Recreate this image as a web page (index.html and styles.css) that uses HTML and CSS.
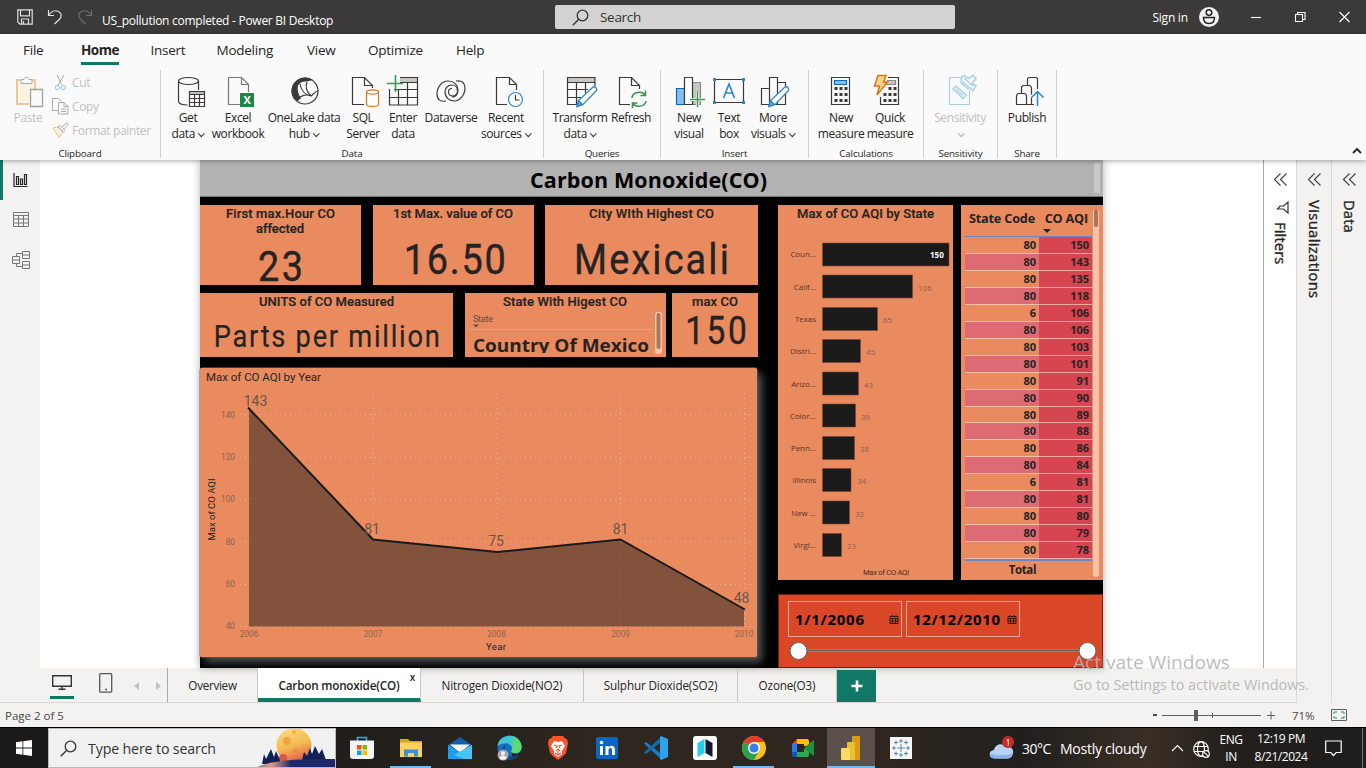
FILE: index.html
```html
<!DOCTYPE html>
<html lang="en">
<head>
<meta charset="utf-8">
<title>US_pollution completed - Power BI Desktop</title>
<link rel="stylesheet" href="styles.css">
</head>
<body>
<header class="titlebar">
  <div class="quick">
    <svg width="16" height="16" viewBox="0 0 16 16" class="ln"><path d="M.8.8h14.4v14.4H3L.8 13zM3.5.8v6h9v-6M4.5 15v-5h7v5M6.5 12v3"/></svg>
    <svg width="16" height="16" viewBox="0 0 16 16" class="ln"><path d="M1.5 1v5.500h5.500M1.500 6.500C4 2.500 8 .8 11.500 2.500c4 2.200 3 6 .8 8L7.500 15"/></svg>
    <svg width="16" height="16" viewBox="0 0 16 16" class="ln dim"><path d="M14.500 1v5.500H9M14.500 6.500C12 2.500 8 .8 4.500 2.500c-4 2.200-3 6-.8 8L8.500 15"/></svg>
  </div>
  <div class="doc">US_pollution completed - Power BI Desktop</div>
  <div class="search"><svg width="17" height="17" viewBox="0 0 17 17"><path d="M.8 16.200 6.500 10.500" /><circle cx="10.500" cy="6.500" r="5.300"/></svg><span>Search</span></div>
  <div class="signin">Sign in</div>
  <svg class="avatar" width="20" height="20" viewBox="0 0 20 20"><circle cx="10" cy="10" r="10" fill="#f3f2f1"/><g fill="none" stroke="#222" stroke-width="1.500"><circle cx="10" cy="5.600" r="2.800"/><path d="M4.500 10.500h11c0 4-2.300 6-5.500 6s-5.500-2-5.500-6z"/></g></svg>
  <div class="winbtns">
    <svg width="10" height="12" viewBox="0 0 10 12"><path d="M0 6.500h10"/></svg>
    <svg width="11" height="12" viewBox="0 0 11 12"><path d="M.5 3.500h7v7h-7zM2.500 3V1.500h7.500v7H8"/></svg>
    <svg width="11" height="12" viewBox="0 0 11 12"><path d="M.5 1l10 10M10.500 1l-10 10"/></svg>
  </div>
</header>

<section class="ribbon">
  <nav class="menu"><a class="m1">File</a><a class="m2 on">Home</a><a class="m3">Insert</a><a class="m4">Modeling</a><a class="m5">View</a><a class="m6">Optimize</a><a class="m7">Help</a></nav>
  <div class="groups">
    <div class="group clip">
      <div class="btns off">
        <div class="btn w56"><svg width="34" height="34" viewBox="0 0 34 34"><path d="M9 5H6v24h12M20 5h4v9" fill="none" stroke="#efc88f" stroke-width="2"/><path d="M8.500 7v20H18V14h4V7z" fill="#fdf3e0"/><path d="M10 8.500V4.500h3c0-3 5-3 5 0h3v4z" fill="#fafafa" stroke="#aaa"/><path d="M19.500 14.500h12v17h-12z" fill="#fafafa" stroke="#a0a0a0" stroke-width="1.300"/></svg><span>Paste</span></div>
        <div class="clipcol">
          <div><svg width="17" height="17" viewBox="0 0 17 17" fill="none" stroke="#aaa"><path d="M5 1l5 10M12 1L6 11"/><g stroke="#9cc9e8"><rect x="3.500" y="11.500" width="4" height="4" rx="1.500"/><rect x="9.500" y="11.500" width="4" height="4" rx="1.500"/></g></svg><span>Cut</span></div>
          <div><svg width="17" height="17" viewBox="0 0 17 17" fill="none" stroke="#aaa"><path d="M6 12.500H.5V.5h6l3 3"/><path d="M6.500 4.500h5.500l4 4v7.500H6.500zM12 4.500v4h4M9 11h5M9 13.500h5"/></svg><span>Copy</span></div>
          <div><svg width="17" height="17" viewBox="0 0 17 17" fill="none" stroke="#aaa"><path d="M1 6l5-1 5 5-4 5.500z" fill="#fdf0dc" stroke="#edc08a"/><path d="M6 5l2-1.500 5 5L11.500 10zM10 5l4.500-4.200 1.700 1.500L12 7"/></svg><span>Format painter</span></div>
        </div>
      </div>
      <div class="glabel">Clipboard</div>
    </div>
    <div class="group data">
      <div class="btns">
        <div class="btn w50"><svg width="34" height="34" viewBox="0 0 34 34" class="ic"><path d="M7.500 6v20c0 2.500 3 4 9 4M27.500 6v9"/><ellipse cx="17.500" cy="6" rx="10" ry="3.500"/><path d="M18.500 16.500h15v15h-15z" fill="#fff"/><path d="M19 17h14v2H19z" fill="#bbb" stroke="none"/><path d="M18.500 19.500h15M18.500 23.500h15M18.500 27.500h15M23.500 19.500v12M28.500 19.500v12"/></svg><span>Get<br>data<i></i></span></div>
        <div class="btn w50"><svg width="34" height="34" viewBox="0 0 34 34" class="ic thin"><path d="M19 29.500H7.500v-27h13l7 7V17M20.500 2.500v7h7"/><path d="M19 18h14v14H19z" fill="#1b8747" stroke="none"/><text x="26" y="29" class="xl">X</text></svg><span>Excel<br>workbook</span></div>
        <div class="btn w82"><svg width="34" height="34" viewBox="0 0 34 34" class="ic"><circle cx="18" cy="16" r="13"/><path d="M10 5.500C14 1.500 22 1.500 26 5l-6 1.500c-4-.5-7 .5-9 4-1 4 0 8 3 13-2 1-3 2-3.500 3C4 22 3.500 15 6 10c1-2 2.500-3.500 4-4.500z" fill="#3b3a39" stroke="none"/><path d="M13 9c1 6 5 11 11 12M20 7c-2 5 0 10 4 14M10.500 25c3-5 9-6 13.500-4 3-2 4-5 7-5"/></svg><span>OneLake data<br>hub<i></i></span></div>
        <div class="btn w36"><svg width="34" height="34" viewBox="0 0 34 34" class="ic"><path d="M18 29.500H6.500v-27h12l8 8V13M18.500 2.500v8h8"/><g stroke="#d8761d"><path d="M20.500 17v12.500c0 2.500 12 2.500 12 0V17" fill="#fff"/><ellipse cx="26.500" cy="17" rx="6" ry="2.200" fill="#fff"/></g></svg><span>SQL<br>Server</span></div>
        <div class="btn w44"><svg width="34" height="34" viewBox="0 0 34 34" class="ic"><path d="M14 3h17v4H14z" fill="#c8c6c4" stroke="none"/><path d="M14 2.500h17.500v27.500h-28V14M14 7.500h17.500M8 14.500h23.500M4 22.500h27.500M12.500 14v16M21.500 7.500V30"/><path d="M9.500 0v17M1 8.500h16" stroke="#2f9e4f" stroke-width="1.600"/></svg><span>Enter<br>data</span></div>
        <div class="btn w52"><svg width="34" height="34" viewBox="0 0 34 34" class="ic"><path d="M22 6c6-1 9 2 9 7 0 7-5 13-11 13-5 0-9-4-9-9 0-4 3-7 6.500-7s6 2.500 6 6-2.500 5-5 5-4-2-4-4 1.500-3.500 3.500-3.500"/><path d="M12 26c-5 1-9-1-9-7C3 12 8 6 14 6c6 0 10 4 10 9 0 4-2.500 7-6 7"/></svg><span>Dataverse</span></div>
        <div class="btn w58"><svg width="34" height="34" viewBox="0 0 34 34" class="ic"><path d="M18 29.500H7.500v-27h13l7 7V15M20.500 2.500v7h7"/><circle cx="26.500" cy="24.500" r="7" stroke="#2a86c8" fill="#fff"/><path d="M26.500 20v5h4"/></svg><span>Recent<br>sources<i></i></span></div>
      </div>
      <div class="glabel">Data</div>
    </div>
    <div class="group quer">
      <div class="btns">
        <div class="btn w60"><svg width="34" height="34" viewBox="0 0 34 34" class="ic"><path d="M5 3h27v4H5z" fill="#c8c6c4" stroke="none"/><path d="M14 29.500H4.500v-27h27.500V11M4.500 7.500H32M4.500 14.500H25M4.500 22.500H18M13.500 7.500v22M22.500 7.500V18"/><path d="M14 31.500l1.500-6L29.500 12.500c2-2 5.500 1 3.500 3.500L20 29.500z" fill="#fff" stroke="#2a86c8"/><path d="M14 31.500l1.500-6 4 4z" fill="#5aa5dc" stroke="#2a86c8"/></svg><span>Transform<br>data<i></i></span></div>
        <div class="btn w42"><svg width="34" height="34" viewBox="0 0 34 34" class="ic"><path d="M16 29.500H5.500v-27h12l8 8V14M17.500 2.500v8h8"/><g stroke="#3a8f4a" stroke-width="1.500"><path d="M18 23c0-6 10-8 13.500-2.500M31.500 15.500v5h-5M32 26c-1 6-10 7-13.500 2M18.500 33v-5h5"/></g></svg><span>Refresh</span></div>
      </div>
      <div class="glabel">Queries</div>
    </div>
    <div class="group ins">
      <div class="btns">
        <div class="btn w40"><svg width="34" height="34" viewBox="0 0 34 34" class="ic"><path d="M20.500 7.500h8v22h-8z" fill="#c8c6c4" stroke="#8a8886"/><path d="M4.500 13.500h8v16h-8z" fill="#83beec" stroke="#1067b5"/><path d="M12.500 2.500h8v27h-8z" fill="#fff"/><path d="M25.500 16v16M18 24.500h15" stroke="#fafafa" stroke-width="3"/><path d="M25.500 16v16M18 24.500h15" stroke="#2f9e4f" stroke-width="1.500"/></svg><span>New<br>visual</span></div>
        <div class="btn w40"><svg width="34" height="34" viewBox="0 0 34 34" class="ic"><path d="M2.500 4.500h29v23h-29z"/><g fill="#2a86c8" stroke="none"><path d="M1 3h3v3H1zM30 3h3v3h-3zM1 26h3v3H1zM30 26h3v3h-3z"/></g><path d="M11.500 23l5.500-14 5.500 14M13 18h8" stroke="#2a86c8" stroke-width="1.600"/></svg><span>Text<br>box</span></div>
        <div class="btn w48"><svg width="34" height="34" viewBox="0 0 34 34" class="ic"><path d="M5.500 13.500h8v16h-8zM13.500 2.500h8v27h-8zM21.500 7.500h8v22h-8"/><path d="M13 31.500l1.500-6L28.500 12.500c2-2 5.500 1 3.500 3.500L19 29.500z" fill="#fff" stroke="#2a86c8"/><path d="M13 31.500l1.500-6 4 4z" fill="#5aa5dc" stroke="#2a86c8"/></svg><span>More<br>visuals<i></i></span></div>
      </div>
      <div class="glabel">Insert</div>
    </div>
    <div class="group calc">
      <div class="btns">
        <div class="btn w50"><svg width="34" height="34" viewBox="0 0 34 34" class="ic"><path d="M7.500 2.500h18v27h-18z"/><path d="M10.500 5.500h12v4h-12z" fill="#83beec" stroke="#1067b5"/><path d="M10.500 13.500h13M10.500 19.500h13M10.500 25.500h13" stroke-width="3" stroke-dasharray="3 2"/></svg><span>New<br>measure</span></div>
        <div class="btn w48"><svg width="34" height="34" viewBox="0 0 34 34" class="ic"><path d="M15 2.500h10.500v27h-18V22"/><path d="M14 5.500h8.500v4H13" fill="#c8c6c4" stroke="#8a8886"/><path d="M15.500 13.500h8M10.500 19.500h13M10.500 25.500h13" stroke-width="3" stroke-dasharray="3 2"/><path d="M5 .5h8L10.500 7h4L4 20l2.500-9H1.500z" fill="#fbd38a" stroke="#d8761d" stroke-width="1.500"/></svg><span>Quick<br>measure</span></div>
      </div>
      <div class="glabel">Calculations</div>
    </div>
    <div class="group sens">
      <div class="btns off">
        <div class="btn w60"><svg width="34" height="34" viewBox="0 0 34 34" fill="none" stroke="#a9d2ea" stroke-width="1.200"><path d="M18 2.500H6.500v27h20V16"/><path d="M10 14l3-3 10 9-3 3.500zM13 14l7 6.500M19 1.500l3-1 3 3 5-3 3 3-4 5 4 2-3 5-12-10zM17 7l9 8M21 3l9 8" stroke-width="1.500"/></svg><span>Sensitivity<br><i></i></span></div>
      </div>
      <div class="glabel">Sensitivity</div>
    </div>
    <div class="group share">
      <div class="btns">
        <div class="btn w40"><svg width="34" height="34" viewBox="0 0 34 34" class="ic"><path d="M6.500 29.500v-9l1.500-2h7l1.500 2v9zM11.500 18v-6l1.500-1.500h7l1.500 2v17H16M17.500 10V3.500l1.500-1h7l1.500 1V14M21 29.500h3"/><path d="M27.500 31V16M21.500 22.500l6-6 6 6" stroke="#fafafa" stroke-width="4"/><path d="M27.500 31V16M21.500 22.500l6-6 6 6" stroke="#2a86c8" stroke-width="1.500"/></svg><span>Publish</span></div>
      </div>
      <div class="glabel">Share</div>
    </div>
    <svg class="collapse" width="10" height="6" viewBox="0 0 10 6"><path d="M1 5l4-4 4 4"/></svg>
  </div>
</section>

<main class="main">
  <div class="left">
    <div class="work">
      <aside class="rail">
        <div class="on"><svg width="18" height="16" viewBox="0 0 18 16"><path d="M2 1v13.500h13.500M4.500 4.500h2v8h-2zM8.500 7h2v5.500h-2zM12.500 2.500h2v10h-2z" stroke="#252423" stroke-width="1.200"/></svg></div>
        <div><svg width="18" height="16" viewBox="0 0 18 16"><path d="M1.500.5h15v14h-15zM1.500 3.500h15M1.500 7h15M1.500 11h15M6.500 3.500v11M11.500 3.500v11"/></svg></div>
        <div><svg width="20" height="18" viewBox="0 0 20 18"><path d="M1.500 5.500h7v7h-7zM1.500 9h7M11.500.5h7v7h-7zM11.500 4h7M11.500 10.500h7v7h-7zM11.500 14h7M5.500 5V2.500h6M5.500 13v2.500h6"/></svg></div>
      </aside>
      <div class="canvas">
        <article class="report">
          <div class="heading"><svg width="240" height="36"><text x="3" y="28" textLength="237" class="ttl">Carbon Monoxide(CO)</text></svg><b></b></div>
          <div class="cols">
            <div class="colA">
              <div class="row r1">
                <svg class="card" width="161" height="80"><text x="26" y="13" textLength="109" class="ct">First max.Hour CO</text><text x="56" y="28" textLength="48" class="ct">affected</text><text transform="scale(.88 1)" x="66" y="76" textLength="51" class="big">23</text></svg>
                <svg class="card" width="161" height="80"><text x="20" y="13" textLength="120" class="ct">1st Max. value of CO</text><text transform="scale(.88 1)" x="35" y="69" textLength="116" class="big">16.50</text></svg>
                <svg class="card" width="213" height="80"><text x="44" y="13" textLength="125" class="ct">City WIth Highest CO</text><text transform="scale(.88 1)" x="33" y="69" textLength="176" class="big">Mexicali</text></svg>
              </div>
              <div class="row r2">
                <svg class="card" width="253" height="64"><text x="59" y="13" textLength="135" class="ct">UNITS of CO Measured</text><text transform="scale(.88 1)" x="15.500" y="54" textLength="257" class="mid">Parts per million</text></svg>
                <svg class="card" width="201" height="64"><text x="38" y="13" textLength="124" class="ct">State With Higest CO</text><text x="8" y="29" textLength="20" class="tiny">State</text><path d="M8 31.500h6l-3 3z" fill="#6b4a3a"/><path d="M4 36.500h184" stroke="#e3a080"/><svg width="188" height="60" class="cut"><text x="8" y="59" textLength="176" lengthAdjust="spacingAndGlyphs" class="seg">Country Of Mexico</text></svg><rect x="190" y="19" width="7" height="42" rx="3" fill="#f7c6ad"/><rect x="191.500" y="20" width="4" height="36" rx="2" fill="#a8755d"/></svg>
                <svg class="card" width="86" height="64"><text x="20" y="13" textLength="46" class="ct">max CO</text><text transform="scale(.88 1)" x="15" y="51" textLength="70" class="big b2">150</text></svg>
              </div>
              <svg class="area" width="557" height="289" viewBox="0 0 557 289">
                <text x="6" y="13" textLength="115" class="at">Max of CO AQI by Year</text>
                <g class="grid"><path d="M40 46.500h512M40 89.500h512M40 131.500h512M40 173.500h512M40 216.500h512M40 258.500h512M49.500 25v234M173 25v234M297 25v234M420.500 25v234M544.500 25v234"/></g>
                <path d="M49 40L173 171.500 297 184 420.500 171.500 544 241V258.500H49z" fill="#1a1a1a" fill-opacity=".5"/>
                <path d="M48 39.500L173 171.500 297 184 420.500 171.500 545 241.500" fill="none" stroke="#1a1a1a" stroke-width="2"/>
                <g class="ax end"><text x="35" y="50">140</text><text x="35" y="92">120</text><text x="35" y="134">100</text><text x="35" y="177">80</text><text x="35" y="219">60</text><text x="35" y="261">40</text></g>
                <g class="ax midl"><text x="49" y="269">2006</text><text x="173" y="269">2007</text><text x="296.500" y="269">2008</text><text x="420.500" y="269">2009</text><text x="544" y="269">2010</text></g>
                <g class="dl"><text x="55.500" y="38">143</text><text x="172" y="166">81</text><text x="296" y="178">75</text><text x="420.500" y="166">81</text><text x="541.500" y="235">48</text></g>
                <text x="286" y="282" textLength="20" class="an">Year</text>
                <text transform="translate(15 172.500) rotate(-90)" textLength="62" class="an">Max of CO AQI</text>
              </svg>
            </div>
            <div class="colB">
              <div class="row r3">
                <svg class="card" width="175" height="375" viewBox="0 0 175 375">
                  <text x="19" y="13" textLength="137" class="ct">Max of CO AQI by State</text>
                  <g fill="#1a1a1a" stroke="#7a4630" stroke-width=".6"><path d="M44.500 38h126.500v23h-126.500zM44.500 70h90v23h-90zM44.500 102.500h55v23h-55zM44.500 134.500h38v23h-38zM44.500 167h36v23h-36zM44.500 199h33v23h-33zM44.500 231.500h32v23h-32zM44.500 263.500h28.500v23h-28.500zM44.500 296h27v23h-27zM44.500 328.500h19v23h-19z"/></g>
                  <g class="bl"><text x="38" y="52">Coun...</text><text x="38" y="85">Calif...</text><text x="38" y="117">Texas</text><text x="38" y="149">Distri...</text><text x="38" y="182">Arizo...</text><text x="38" y="214">Color...</text><text x="38" y="246">Penn...</text><text x="38" y="278">Illinois</text><text x="38" y="311">New ...</text><text x="38" y="343">Virgi...</text></g>
                  <g class="bv"><text x="152" y="53" class="wh">150</text><text x="140" y="86">106</text><text x="105" y="118">65</text><text x="88" y="150">45</text><text x="86" y="183">43</text><text x="83" y="215">39</text><text x="82" y="247">38</text><text x="79" y="279">34</text><text x="77" y="312">32</text><text x="69" y="344">23</text></g>
                  <text x="85" y="370" textLength="46" class="mx">Max of CO AQI</text>
                </svg>
                <div class="tablecard">
                  <div class="tbl">
                    <div class="th"><span>State Code</span><span>CO AQI</span></div>
                    <div class="tr"><span>80</span><span>150</span></div><div class="tr"><span>80</span><span>143</span></div><div class="tr"><span>80</span><span>135</span></div><div class="tr"><span>80</span><span>118</span></div><div class="tr"><span>6</span><span>106</span></div><div class="tr"><span>80</span><span>106</span></div><div class="tr"><span>80</span><span>103</span></div><div class="tr"><span>80</span><span>101</span></div><div class="tr"><span>80</span><span>91</span></div><div class="tr"><span>80</span><span>90</span></div><div class="tr"><span>80</span><span>89</span></div><div class="tr"><span>80</span><span>88</span></div><div class="tr"><span>80</span><span>86</span></div><div class="tr"><span>80</span><span>84</span></div><div class="tr"><span>6</span><span>81</span></div><div class="tr"><span>80</span><span>81</span></div><div class="tr"><span>80</span><span>80</span></div><div class="tr"><span>80</span><span>79</span></div><div class="tr"><span>80</span><span>78</span></div>
                    <div class="tf"><span>Total</span></div>
                  </div>
                  <div class="sb"><b></b></div>
                </div>
              </div>
              <div class="slicer">
                <div class="dates">
                  <div class="date"><svg width="70" height="20"><text x="0" y="15" textLength="69">1/1/2006</text></svg><svg width="10" height="9" viewBox="0 0 10 9" class="cal"><path d="M1 1.500h8v7H1zM1 3.500h8M1 6h8M3.500 3.500v5M6.500 3.500v5M3 0v2M7 0v2"/></svg></div>
                  <div class="date"><svg width="88" height="20"><text x="0" y="15" textLength="87">12/12/2010</text></svg><svg width="10" height="9" viewBox="0 0 10 9" class="cal"><path d="M1 1.500h8v7H1zM1 3.500h8M1 6h8M3.500 3.500v5M6.500 3.500v5M3 0v2M7 0v2"/></svg></div>
                </div>
                <svg width="324" height="26" viewBox="0 0 324 26"><path d="M20 11.500h289" stroke="#b07a68" stroke-width="3"/><path d="M20 11.500h289" stroke="#605e5c"/><g fill="#fff" stroke="#605e5c"><circle cx="19.500" cy="12" r="8.500"/><circle cx="308.500" cy="12" r="8.500"/></g></svg>
              </div>
            </div>
          </div>
        </article>
      </div>
      <aside class="filters"><svg class="chev" width="13" height="13" viewBox="0 0 13 13"><path d="M6.500.5l-6 6 6 6M12.500.5l-6 6 6 6"/></svg><svg width="13" height="13" viewBox="0 0 13 13" class="fun"><path d="M12 1v11L7.500 8H1.500L4 5H7.500z" /></svg><span>Filters</span></aside>
    </div>
    <div class="tabs">
      <div class="views">
        <div class="vw on"><svg width="20" height="16" viewBox="0 0 20 16"><path d="M.7.700h18.600v10.500H.7z" stroke-width="1.400"/><path d="M10 11v3M6.500 14.300h7" stroke-width="1.400"/></svg></div>
        <svg class="ph" width="14" height="20" viewBox="0 0 14 20"><rect x=".7" y=".7" width="12" height="18.500" rx="1"/><path d="M6 16.500h2" /></svg>
        <svg class="ar" width="5" height="8" viewBox="0 0 5 8"><path d="M5 0v8L0 4z"/></svg>
        <svg class="ar a2" width="5" height="8" viewBox="0 0 5 8"><path d="M0 0v8l5-4z"/></svg>
      </div>
      <div class="tab t1"><span>Overview</span></div><div class="tab t2 on"><span>Carbon monoxide(CO)</span><em>x</em></div><div class="tab t3"><span>Nitrogen Dioxide(NO2)</span></div><div class="tab t4"><span>Sulphur Dioxide(SO2)</span></div><div class="tab t5"><span>Ozone(O3)</span></div>
      <div class="plus"><svg width="12" height="12" viewBox="0 0 12 12"><path d="M6 .5v11M.5 6h11" stroke="#fff" stroke-width="2.600"/></svg></div>
    </div>
  </div>
  <aside class="pane"><svg class="chev" width="13" height="13" viewBox="0 0 13 13"><path d="M6.500.5l-6 6 6 6M12.500.5l-6 6 6 6"/></svg><span class="s1">Visualizations</span></aside>
  <aside class="pane"><svg class="chev" width="13" height="13" viewBox="0 0 13 13"><path d="M6.500.5l-6 6 6 6M12.500.5l-6 6 6 6"/></svg><span class="s2">Data</span></aside>
</main>

<footer class="status">
  <span class="pg">Page 2 of 5</span>
  <svg width="124" height="14" viewBox="0 0 124 14"><path d="M1 7h4" stroke="#444" stroke-width="2"/><path d="M10 7.500h99" stroke="#605e5c"/><path d="M42 2h4v11h-4z" fill="#605e5c"/><path d="M60.500 5v5M115 7.500h8M119 3.500v8" stroke="#605e5c"/></svg>
  <span class="pct">71%</span>
  <svg width="16" height="12" viewBox="0 0 16 12" fill="none" stroke="#605e5c"><path d="M.5.500h15v11H.5z"/><path d="M3 5V3h3M10 3h3v2M13 7v2h-3M6 9H3V7" stroke="#3f8a5c"/></svg>
</footer>

<footer class="taskbar">
  <div class="start"><svg width="16" height="16" viewBox="0 0 16 16" fill="#fff"><path d="M0 2.200l6.500-.9v6.200H0zM7.300 1.200L16 0v7.500H7.300zM0 8.400h6.500v6.300L0 13.800zM7.300 8.400H16V16l-8.700-1.200z"/></svg></div>
  <div class="tsearch"><svg width="17" height="17" viewBox="0 0 17 17" class="mg"><path d="M.8 16.200 6.500 10.500" /><circle cx="10.500" cy="6.500" r="5.300"/></svg><span>Type here to search</span>
    <svg class="moon" width="80" height="40" viewBox="0 0 80 40"><defs><linearGradient id="mn" x1="0" y1="0" x2=".3" y2="1"><stop offset="0" stop-color="#fbe08a"/><stop offset=".6" stop-color="#f6b850"/><stop offset="1" stop-color="#e2684a"/></linearGradient><linearGradient id="hl"><stop offset="0" stop-color="#77708e"/><stop offset=".2" stop-color="#e89a86"/><stop offset=".45" stop-color="#1c2a6c"/></linearGradient></defs><circle cx="39" cy="17.500" r="17.500" fill="url(#mn)"/><circle cx="32" cy="13" r="4" fill="#e8a83f"/><circle cx="48" cy="11.500" r="3" fill="#eec05c"/><circle cx="39" cy="4" r="2" fill="#e8b548"/><circle cx="40" cy="23" r="2.500" fill="#e88e4a"/><circle cx="28" cy="30" r="4" fill="#d9554a"/><path d="M7 36l2-10 2 5 5-10 3 8 2-6 4 9v4zM47 32l2-8 3 4 3-8 2 6 3-8 4 8 3-5 4 11z" fill="#122058"/><path d="M0 40c16-8 40-9 80-9v9z" fill="url(#hl)"/></svg></div>
  <div class="apps">
    <div><svg width="24" height="24" viewBox="0 0 24 24"><path d="M7.500 6V1.500h9V6" fill="none" stroke="#2aa8e8" stroke-width="1.600"/><path d="M0 4.500h24V20a3 3 0 0 1-3 3H3a3 3 0 0 1-3-3z" fill="#f4f4f4"/><path d="M7 9h4.500v4.500H7z" fill="#f25022"/><path d="M12.500 9H17v4.500h-4.500z" fill="#7fba00"/><path d="M7 14.500h4.500V19H7z" fill="#00a4ef"/><path d="M12.500 14.500H17V19h-4.500z" fill="#ffb900"/></svg></div>
    <div class="run"><svg width="24" height="24" viewBox="0 0 24 24"><path d="M1 3h8l2 2h12v5H1z" fill="#e0a21c"/><path d="M1 6.500h22V21H1z" fill="#fdd25f"/><path d="M5 20.500v-7h14v7h-4v-3.500H9v3.500z" fill="#3d8fd8"/></svg></div>
    <div><svg width="24" height="24" viewBox="0 0 24 24"><path d="M0 9L12 1l12 8v3H0z" fill="#0f5ca8"/><path d="M2 8.500h20L12 17z" fill="#f5f5f5"/><path d="M0 9l12 7L24 9v14H0z" fill="#1f9de6"/><path d="M24 9L6 19l10 4h8z" fill="#4cc3f3"/></svg></div>
    <div><svg width="26" height="26" viewBox="0 0 26 26"><circle cx="13.500" cy="12.500" r="12" fill="#1272c4"/><path d="M1.500 11C3-2 24-3 25.500 11c.5 5-3 8-8 7-3-1-2-2-1.500-3 2-5-6-10-14.500-4z" fill="#3fc8d0"/><path d="M17 2c6 2 8.500 6 8.500 10s-4 7-8.500 6c-2-1-2-2-1-4 1-4 1-8 1-12z" fill="#5fda72"/><path d="M10 9c-3 6 0 13 8 13 2 0 4-1 5-2-5 8-16 5-17-2-.6-4 2-8 4-9z" fill="#0d4c95"/><path d="M16 18c5 2 8 0 10-3v11H15z" fill="#2c251f"/><path d="M8 13c0 7 7 11 15 7-4 6-15 7-18-1z" fill="#0d4c95"/><circle cx="7" cy="20" r="5.500" fill="#a9a9a9"/><circle cx="7" cy="18.300" r="2" fill="#f2f2f2"/><path d="M3.500 23.500c0-4 7-4 7 0-2 1.800-5 1.800-7 0z" fill="#f2f2f2"/></svg></div>
    <div><svg width="22" height="24" viewBox="0 0 22 24"><path d="M6 0h10l2 2.500 2 .5 1 4-2 10-4 4-4 3-4-3-4-4L1 7l1-4 2-.5z" fill="#fb542b"/><path d="M7 5l4 1 4-1 3 5-3 5 0 3-4 3-4-3V15l-3-5z" fill="#fff"/><path d="M7 9l3 1-1 2M15 9l-3 1 1 2M9 15l2-2 2 2M11 15v3M8 17l3 2 3-2" fill="none" stroke="#fb542b" stroke-width="1.200"/></svg></div>
    <div><svg width="22" height="22" viewBox="0 0 22 22"><rect width="22" height="22" rx="2" fill="#0a66c2"/><path d="M4 9h3v9H4zM9.500 9h3v1.500c2-3 6.500-2 6.500 2.500v5h-3v-5c0-3-3.500-2.500-3.500 0v5h-3z" fill="#fff"/><circle cx="5.500" cy="5.500" r="1.800" fill="#fff"/></svg></div>
    <div><svg width="24" height="24" viewBox="0 0 24 24"><path d="M0 7.500L2 6l16 12.500V24z" fill="#1480c8"/><path d="M0 16.500L2 18 18 5.500V0z" fill="#0f6cb0"/><path d="M17 0l7 3v18l-7 3-1-1V1z" fill="#2ba3ee"/></svg></div>
    <div><svg width="24" height="24" viewBox="0 0 24 24"><rect width="24" height="24" rx="3" fill="#fff"/><path d="M4.500 7l7-4v14l-7 4z" fill="#21cfe8"/><path d="M12.500 3l7 4v14l-7-4z" fill="#15152b"/></svg></div>
    <div class="run chrome"><svg width="24" height="24" viewBox="0 0 24 24"><circle cx="12" cy="12" r="12" fill="#fbc116"/><path d="M12 12L1.600 6A12 12 0 0 1 22.400 6z" fill="#e33b2e"/><path d="M12 12L1.600 6A12 12 0 0 0 12 24l5-9z" fill="#2ba24c"/><path d="M12 6h10.400L17 15z" fill="#fbc116"/><circle cx="12" cy="12" r="6" fill="#fff"/><circle cx="12" cy="12" r="4.600" fill="#3b7ded"/></svg></div>
    <div><svg width="24" height="20" viewBox="0 0 24 20"><path d="M6 1h10a2 2 0 0 1 2 2v5h-5V6H6z" fill="#fbbc04"/><path d="M6 1v5H1z" fill="#ea4335"/><path d="M1 6h5v8H1z" fill="#2b78f0"/><path d="M1 14h5v5H3a2 2 0 0 1-2-2z" fill="#1557c0"/><path d="M6 14h7v-3h5v6a2 2 0 0 1-2 2H6z" fill="#2fa84f"/><path d="M13 10l9-7.500c.6-.4 1 0 1 .5v14c0 .6-.5 1-1 .5z" fill="#1e8e3e"/></svg></div>
    <div class="run act"><svg width="24" height="24" viewBox="0 0 24 24"><rect x="13" y="0" width="8" height="24" rx="1" fill="#d99a16"/><rect x="8" y="6" width="8" height="18" rx="1" fill="#eebf30"/><rect x="2" y="12" width="9" height="12" rx="1" fill="#f8dc62"/></svg></div>
    <div><svg width="22" height="22" viewBox="0 0 22 22"><rect width="22" height="22" fill="#f6f6f6"/><path d="M11 7v8M7 11h8M11 2v4M9 4h4M11 16v4M9 18h4M2 11h4M4 9v4M16 11h4M18 9v4M6 3.500v4M4 5.500h4M16 3.500v4M14 5.500h4M6 14.500v4M4 16.500h4M16 14.500v4M14 16.500h4" stroke="#4a7ba6" stroke-width=".9"/></svg></div>
  </div>
  <div class="weather"><svg width="26" height="24" viewBox="0 0 26 24"><path d="M6 22.500c-7 0-7-8-1-8.500 1-6 8-8 12-3 5-1 8 3 7 6-.4 4-3 5.500-6 5.500z" fill="#b9d2f7"/><path d="M6 22.500c-5 0-6-4-4-5 5 2 14 2 21.500 0-.4 3.500-3 5-5.500 5z" fill="#8db2ee"/><circle cx="19" cy="6" r="6" fill="#c62a20"/><text x="19" y="9.500" class="n1">1</text></svg><span class="w1">30°C</span><span class="w2">Mostly cloudy</span></div>
  <svg class="up" width="13" height="8" viewBox="0 0 13 8"><path d="M1 7l5.500-5.500L12 7"/></svg>
  <svg class="globe" width="17" height="17" viewBox="0 0 17 17"><circle cx="8" cy="8" r="7.300"/><ellipse cx="8" cy="8" rx="3.500" ry="7.300"/><path d="M1 5.500h14M1 10.500h9"/><circle cx="13" cy="13" r="3.300" fill="#231f1c"/><path d="M10.800 10.800l4.400 4.400"/></svg>
  <div class="lang">ENG<br>IN</div>
  <div class="clock">12:19 PM<br>8/21/2024</div>
  <svg class="note" width="17" height="17" viewBox="0 0 17 17"><path d="M.7 1h15.500v11.500h-5l-2.700 3-2.700-3H.7z"/></svg>
  <div class="edge"></div>
</footer>

<div class="mark"><svg width="240" height="48"><text x="0" y="20" textLength="157" lengthAdjust="spacingAndGlyphs" class="k1">Activate Windows</text><text x="0" y="41" textLength="236" lengthAdjust="spacingAndGlyphs" class="k2">Go to Settings to activate Windows.</text></svg></div>
</body>
</html>
```
FILE: styles.css
```css
*{box-sizing:border-box}
body{margin:0;width:1366px;height:768px;overflow:hidden;display:flex;flex-direction:column;font-family:"Open Sans","Noto Sans",sans-serif;font-size:12px;color:#252423;background:#f3f2f1;position:relative}
svg{display:block;flex:none;overflow:visible}
.cut{overflow:hidden}
.titlebar{height:34px;background:#3b3a38;display:flex;align-items:center;color:#fff;flex:none}
.quick{display:flex;gap:14px;padding-left:17px;width:102px}
.ln{fill:none;stroke:#e0dfdd;stroke-width:1.2}
.dim{stroke:#6e6c6a}
.doc{width:453px;letter-spacing:-.27px;padding-top:6px;white-space:nowrap}
.search{width:400px;height:24px;background:#d4d3d1;border-radius:2px;display:flex;align-items:center;padding-left:17px;gap:11px;color:#333;font-size:13.500px;letter-spacing:-.3px}
.search svg,.mg{fill:none;stroke:#333;stroke-width:1.3}
.signin{margin-left:197.500px;width:46.500px;white-space:nowrap;letter-spacing:-.25px}
.winbtns{display:flex;gap:33.500px;margin-left:32px}
.winbtns svg{fill:none;stroke:#fff;stroke-width:1.1}
.ribbon{height:126px;background:#fafafa;flex:none;box-shadow:0 1px 5px rgba(0,0,0,.35);position:relative;z-index:2}
.menu{display:flex;height:35px;padding:7px 0 0 23px;font-size:13.500px;letter-spacing:-.25px}
.menu a{height:24px;margin-right:32px;white-space:nowrap;line-height:18px}
.m1{width:26px}.m2{width:38px}.m3{width:34px}.m4{width:58.500px}.m5{width:29px}.m6{width:56px}
.menu .on{font-weight:700;border-bottom:3px solid #117865;letter-spacing:-.5px}
.menu .m3{margin-left:-.5px}
.groups{display:flex;height:91px}
.group{height:88px;border-right:1px solid #d2d0ce;margin-top:1px;display:flex;flex-direction:column}
.clip{width:161px}.data{width:383px}.quer{width:117px}.ins{width:148px}.calc{width:115px}.sens{width:74px}.share{width:59px}
.btns{display:flex;height:75px;padding-top:5px;flex:none}
.data .btns{padding-left:2px}.quer .btns{padding-left:6px}.ins .btns{padding-left:8px}.calc .btns{padding-left:7px}.sens .btns{padding-left:6px}.share .btns{padding-left:9px}
.btn{display:flex;flex-direction:column;align-items:center;text-align:center;line-height:16px;letter-spacing:-.4px;white-space:nowrap;flex:none}
.btn span{margin-top:1px}
.w36{width:36px}.w40{width:40px}.w42{width:42px}.w44{width:44px}.w48{width:48px}.w50{width:50px}.w52{width:52px}.w56{width:56px}.w58{width:58px}.w60{width:60px}.w82{width:82px}
.btn i{display:inline-block;width:4.500px;height:4.500px;border:solid #252423;border-width:0 1.300px 1.300px 0;transform:rotate(45deg);margin:0 1px 3px 4px}
.off{color:#c2c0be}.off i{border-color:#a8a6a4}
.ic{fill:none;stroke:#3b3a39;stroke-width:1.200}
.thin{stroke:#777}
.xl{font:700 11px "Open Sans",sans-serif;fill:#fff;stroke:none;text-anchor:middle}
.glabel{font-size:9.800px;text-align:center;line-height:12px;letter-spacing:-.15px;margin-top:3px;flex:none}
.clipcol{line-height:17px;letter-spacing:-.36px;margin-top:-1px}
.clipcol div{display:flex;gap:3px;height:24px;margin-left:-4px;white-space:nowrap}
.collapse{margin:79px 0 0 295px;fill:none;stroke:#252423;stroke-width:1.800}
.main{display:flex;height:543px;flex:none}
.left{width:1296px;flex:none}
.work{display:flex;height:508px}
.rail{width:40px;background:#f3f2f1}
.rail div{height:40px;display:flex;align-items:center;justify-content:center;border-left:3px solid transparent;padding-right:2px}
.rail .on{border-color:#117865}
.rail svg{fill:none;stroke:#777}
.canvas{width:1223px;background:#fff;padding-left:160px}
.report{width:903px;height:508px;background:#000;box-shadow:0 0 8px rgba(0,0,0,.3)}
.heading{height:37px;background:#b2b2b2;border-bottom:1px solid #777;display:flex;padding-left:327px}
.heading b{width:6px;height:30px;background:#c8c8c8;margin:3px 0 0 327px}
.ttl{font:700 21.500px "Open Sans",sans-serif;fill:#000}
.cols{display:flex;padding-top:8px}
.colA{width:558px;margin-right:20px;flex:none}
.colB{width:325px}
.row{display:flex}
.card{background:#ea8a5f}
.r1{gap:12px;height:88px}.r1 .card:last-child{margin-left:-1px}
.r2{height:75px}.r2 .card:nth-child(2){margin:0 6px 0 12px}
svg text{white-space:pre}
.ct{font:500 13px Roboto,sans-serif;fill:#252423;stroke:#252423;stroke-width:.2}
.big{font:400 43px Roboto,sans-serif;fill:#252423;stroke:#252423;stroke-width:.4}
.b2{font-size:38px}
.mid{font:400 31px Roboto,sans-serif;fill:#252423;stroke:#252423;stroke-width:.2}
.tiny{font:9px Roboto,sans-serif;fill:#6b4a3a}
.seg{font:700 18.500px "Open Sans",sans-serif;fill:#252423}
.area{background:#ea8a5f;border-radius:2px;box-shadow:5px 5px 8px #555,0 0 0 .5px #777}
.at{font:11.500px Roboto,sans-serif;fill:#252423}
.grid path{stroke:#f3b394;stroke-dasharray:1 4;fill:none}
.ax text{font:8.300px Roboto,sans-serif;fill:#8b6550}
.end{text-anchor:end}.midl{text-anchor:middle}
.dl text{font:14px Roboto,sans-serif;fill:#6b5548;text-anchor:middle}
.an{font:9.500px Roboto,sans-serif;fill:#252423}
.r3{height:388.600px;gap:8px}
.bl text{font:7.900px "Open Sans",sans-serif;fill:#5e3422;text-anchor:end}
.bv text{font:8px "Open Sans",sans-serif;fill:#8f5f4a}
.bv .wh{font-weight:700;fill:#fff}
.mx{font:7.500px Roboto,sans-serif;fill:#4a2c1e}
.tablecard{width:142px;height:375px;background:#ea8a5f;display:flex;padding:4px 0 0 4px}
.tbl{width:127px;font-weight:700;font-size:11px}
.th{height:28px;border-bottom:1px solid #6f86c0;display:flex;line-height:18px;font-size:12.700px;letter-spacing:-.2px;justify-content:space-between;padding:0 4px;position:relative;white-space:nowrap}
.th:after{content:"";position:absolute;left:78px;top:20px;border:4px solid transparent;border-top-color:#252423;border-bottom:0}
.tr{display:flex;height:16.960px;line-height:16.500px;text-align:right}
.tr span{width:74px;padding-right:3px;border-bottom:1px solid #f1bfaa}
.tr span+span{width:53px;background:#d64550;border-color:#eba8a4}
.tr:nth-child(odd) span:first-child{background:#de6a73}
.tf{border-top:2px solid #6f86c0;width:127px;height:18px;line-height:17px;padding-right:56px;text-align:right;font-size:11.500px;letter-spacing:-.4px}
.sb{width:6px;height:368px;margin-left:1px;background:#f5c2aa;border-radius:3px}
.sb b{display:block;height:18px;background:#a8755d;border-radius:2px;margin:0 1px}
.slicer{height:74px;width:325px;background:#d94727;border:1px solid #6b2312;padding:6px 0 0 9px}
.dates{display:flex;gap:4px}
.date{width:114px;height:36px;border:1px solid #eba796;display:flex;justify-content:space-between;align-items:center;padding:2px 2px 0 6px}
.date text{font:700 15px "Open Sans",sans-serif}
.cal{fill:none;stroke:#3a1108;stroke-width:1}
.slicer>svg{margin:2px 0 0 -9px}
.filters{width:33px;background:#fff;border-left:1px solid #aaa;flex:none}
.pane{width:35px;background:#f3f2f1;border-left:1px solid #dcdad8;flex:none}
.chev{margin:13px 0 0 10px;fill:none;stroke:#484644;stroke-width:1.200}
.pane .chev{margin-left:11px}
.fun{margin:15px 0 0 12px;fill:none;stroke:#333;stroke-width:1.200}
.filters span,.pane span{writing-mode:vertical-rl;display:block;font-size:14.800px;line-height:20px;margin-left:7px;height:120px;white-space:nowrap;-webkit-text-stroke:.35px;letter-spacing:.1px}
.pane .s1{letter-spacing:.35px}
.filters span{margin-top:8px}.pane span{margin:14px 0 0 8px}
.tabs{display:flex;height:35px;border-bottom:1px solid #dad8d6;background:#f3f2f1}
.views{width:168px;border-right:1px solid #aaa;display:flex;flex:none}
.vw{margin-left:50px;width:24px;height:31px;padding:7px 0 0 2px;border-bottom:3px solid #117865}
.vw svg,.ph{fill:none;stroke:#333}
.ph{margin:5px 0 0 25px;stroke:#555;stroke-width:1.300}
.ar{margin:14px 0 0 21px;fill:#c2c0be}.a2{margin-left:17px}
.tab{border-right:1px solid #c8c6c4;text-align:center;line-height:35px;font-size:11.700px;letter-spacing:-.13px;white-space:nowrap;position:relative;flex:none}
.t1{width:90px;letter-spacing:-.3px}.t2{width:163px}.t3{width:163px}.t4{width:154px}.t5{width:99px}
.tab.on{background:#fff;border-bottom:4px solid #117865;font-weight:600;letter-spacing:-.2px}
.tab em{position:absolute;right:5px;top:1px;font-style:normal;line-height:17px;font-size:10px}
.plus{width:39px;height:32px;background:#117865;margin-top:2px;display:flex;align-items:center;justify-content:center}
.status{height:24px;flex:none;display:flex;align-items:center;color:#484644;font-size:11.500px;padding-left:5px;background:#f3f2f1}
.pg{width:1147px}
.pct{margin:0 14px 0 16px;width:25px;letter-spacing:-.1px}
.taskbar{height:41px;flex:none;background:linear-gradient(90deg,#1b1a19 0,#211e1b 25%,#2f271f 45%,#2e261f 65%,#211f1e 75%,#3a2f25 84%,#231f1c 90%,#1e1e1e 100%);border-top:1px solid #000;display:flex;color:#fff}
.taskbar>*{flex:none}
.start{width:48px;display:flex;align-items:center;justify-content:center}
.tsearch{width:288px;background:#f1f1f1;border:1px solid #bbb;display:flex;align-items:center;padding-left:11px;font-size:14.200px;letter-spacing:-.14px;color:#333;white-space:nowrap;overflow:hidden}
.tsearch span{margin-left:11px;width:168px}
.apps{display:flex;margin-left:1px}
.apps div{width:49px;display:flex;align-items:center;justify-content:center}
.apps .run{border-bottom:2px solid #76b9ed;padding-top:2px;width:41px;margin:0 4px}
.apps .act{background:#5b514a;width:48px;margin:0 1px 0 0}
.weather{display:flex;align-items:center;margin-left:64px;width:182px;font-size:14px;letter-spacing:-.25px;white-space:nowrap}
.w1{margin-left:7px;width:38px;letter-spacing:-.5px}
.n1{font:9px "Open Sans",sans-serif;fill:#fff;text-anchor:middle}
.up,.globe,.note{fill:none;stroke:#fff;stroke-width:1.200}
.up{margin-top:16px}
.globe{margin:13px 0 0 9px}
.lang{width:44px;text-align:center;line-height:17px;padding-top:3px;letter-spacing:-.5px;margin-left:-1px}
.clock{width:60px;text-align:center;line-height:18px;padding-top:2px;letter-spacing:-.45px;white-space:nowrap;margin-left:-2px}
.note{margin:12px 0 0 14px}
.edge{width:1px;background:#777;margin-left:20px}
.mark{position:absolute;left:1073px;top:649px;z-index:5;color:#bbb}
.k1{font:18.500px "Open Sans",sans-serif;fill:#b4b4b4;fill-opacity:.9}
.k2{font:14px "Open Sans",sans-serif;fill:#b9b9b9}
```
